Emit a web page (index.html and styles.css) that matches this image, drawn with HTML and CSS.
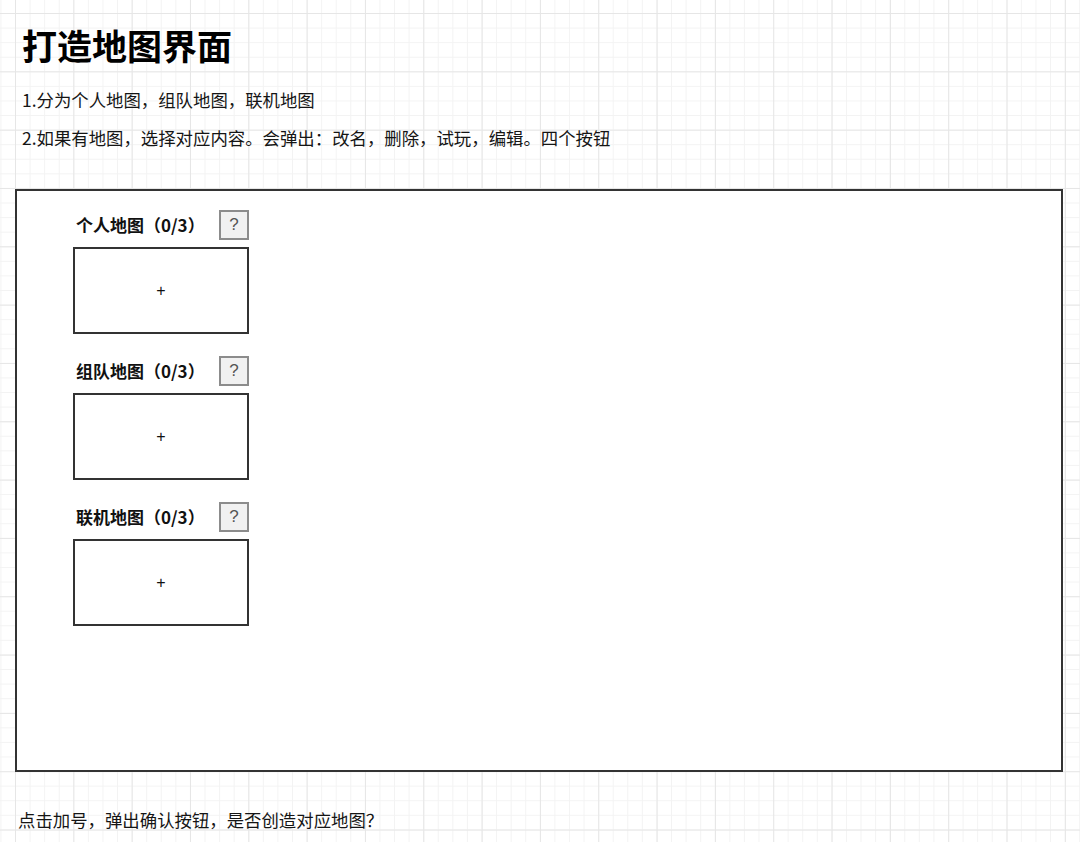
FILE: index.html
```html
<!DOCTYPE html>
<html lang="zh-CN">
<head>
<meta charset="utf-8">
<title>打造地图界面</title>
<link rel="stylesheet" href="styles.css">
</head>
<body>
<div class="page">
  <header class="intro">
    <h1 class="title">打造地图界面</h1>
    <p class="line">1.分为个人地图，组队地图，联机地图</p>
    <p class="line">2.如果有地图，选择对应内容。会弹出：改名，删除，试玩，编辑。四个按钮</p>
  </header>

  <main class="frame">
    <section class="group">
      <div class="group-head">
        <span class="group-label">个人地图（0/3）</span>
        <span class="help">?</span>
      </div>
      <div class="slot">+</div>
    </section>
    <section class="group">
      <div class="group-head">
        <span class="group-label">组队地图（0/3）</span>
        <span class="help">?</span>
      </div>
      <div class="slot">+</div>
    </section>
    <section class="group">
      <div class="group-head">
        <span class="group-label">联机地图（0/3）</span>
        <span class="help">?</span>
      </div>
      <div class="slot">+</div>
    </section>
  </main>

  <p class="note">点击加号，弹出确认按钮，是否创造对应地图？</p>
</div>
</body>
</html>
```

FILE: styles.css
```css
* {
  box-sizing: border-box;
}

html, body {
  margin: 0;
  padding: 0;
}

body {
  width: 1080px;
  height: 842px;
  overflow: hidden;
  font-family: "Noto Sans CJK SC", "Noto Sans", "Liberation Sans", sans-serif;
  color: #111;
  background-color: #ffffff;
  background-image:
    linear-gradient(to right, #e6e6e6 1px, transparent 1px),
    linear-gradient(to bottom, #e6e6e6 1px, transparent 1px),
    linear-gradient(to right, #f3f3f3 1px, transparent 1px),
    linear-gradient(to bottom, #f3f3f3 1px, transparent 1px);
  background-size:
    58.33px 58.33px,
    58.33px 58.33px,
    14.58px 14.58px,
    14.58px 14.58px;
  background-position:
    15px 13px,
    15px 13px,
    15px 13px,
    15px 13px;
}

.page {
  display: flex;
  flex-direction: column;
}

.intro {
  padding: 18px 0 0 22px;
  display: flex;
  flex-direction: column;
}

.title {
  margin: 0 0 14px 0;
  font-size: 35px;
  line-height: 54px;
  font-weight: 700;
  color: #000;
}

.line {
  margin: 0 0 10px 0;
  font-size: 17.4px;
  line-height: 28px;
  color: #151515;
}

.frame {
  margin: 27px 0 0 15px;
  width: 1048px;
  height: 583px;
  border: 2px solid #333;
  background: #fff;
  padding: 19px 0 0 56px;
  display: flex;
  flex-direction: column;
  gap: 22px;
}

.group {
  width: 176px;
  display: flex;
  flex-direction: column;
  gap: 7px;
}

.group-head {
  height: 30px;
  display: flex;
  align-items: center;
  justify-content: space-between;
}

.group-label {
  padding-left: 3px;
  font-size: 17px;
  font-weight: 700;
  color: #111;
  line-height: 30px;
}

.help {
  width: 30px;
  height: 30px;
  border: 2px solid #8c8c8c;
  background: #f1f1f1;
  color: #555;
  font-family: "Liberation Sans", Arial, sans-serif;
  font-size: 17px;
  display: flex;
  align-items: center;
  justify-content: center;
}

.slot {
  width: 176px;
  height: 87px;
  border: 2px solid #333;
  background: #fff;
  display: flex;
  align-items: center;
  justify-content: center;
  font-family: "Liberation Sans", Arial, sans-serif;
  font-size: 16px;
  color: #111;
}

.note {
  margin: 34px 0 0 18px;
  font-size: 17.4px;
  line-height: 28px;
  color: #151515;
}
```
